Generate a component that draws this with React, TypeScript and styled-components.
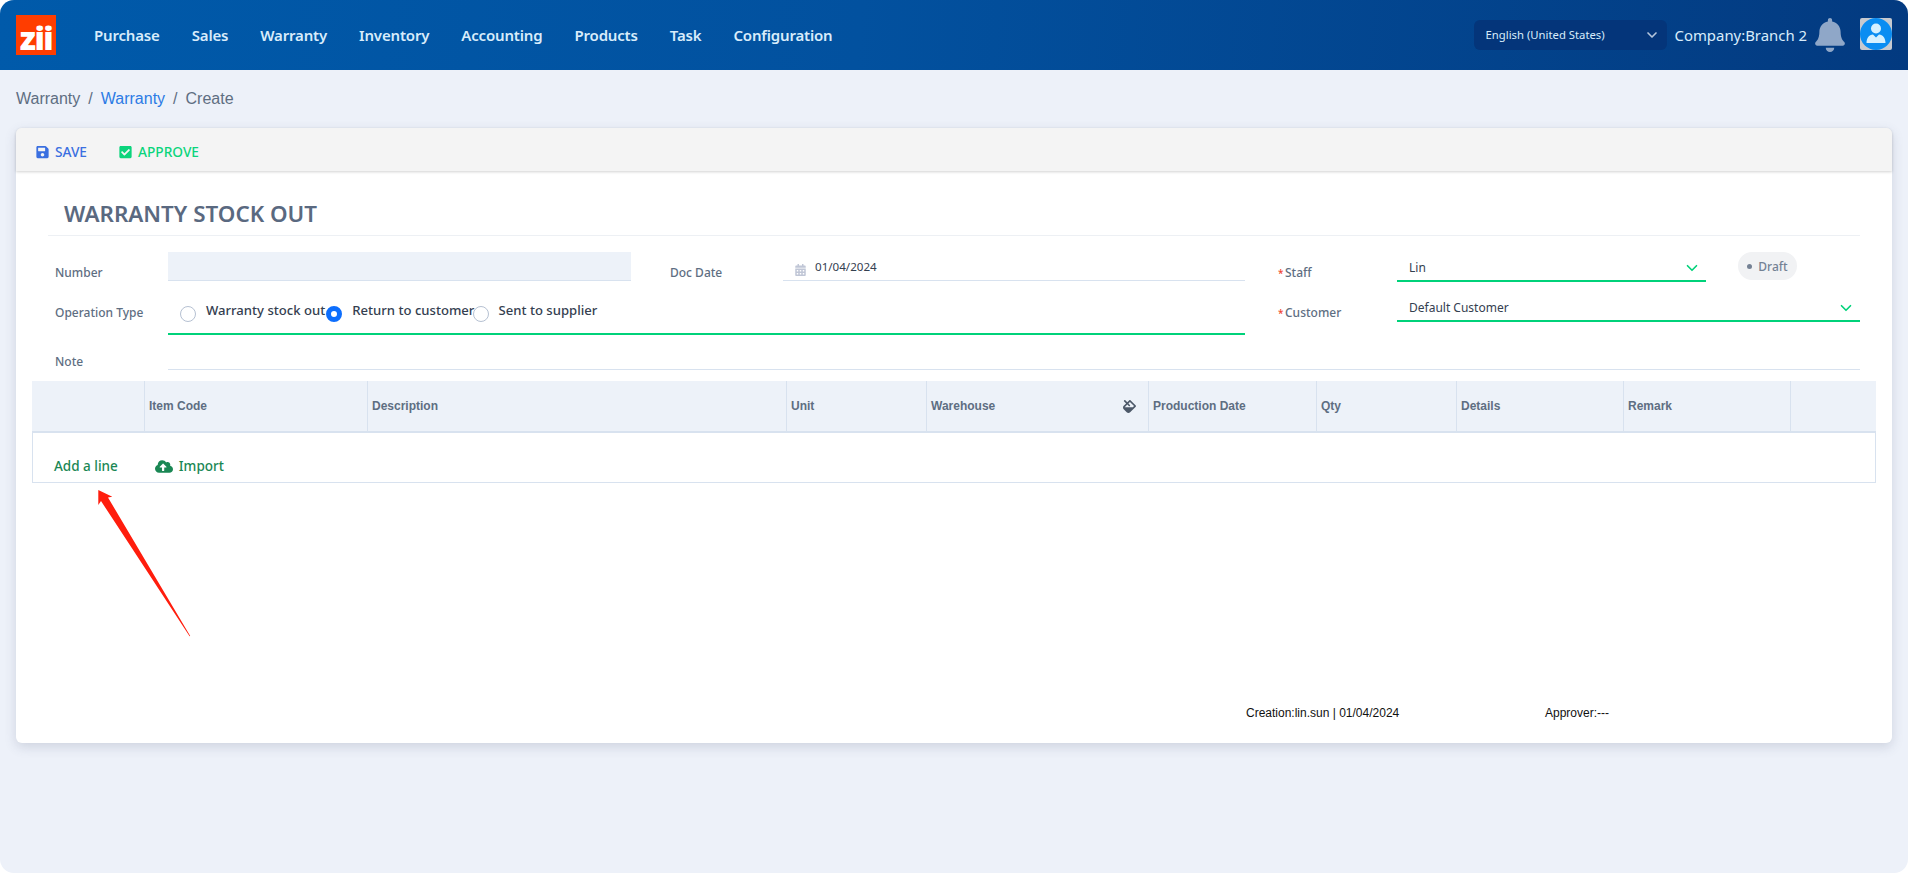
import React from 'react';
import styled, { createGlobalStyle } from 'styled-components';
import { FaSave, FaCheckSquare, FaFill, FaCloudUploadAlt, FaBell, FaCalendarAlt } from 'react-icons/fa';
import { ChevronDown } from 'lucide-react';

const ui = '"Noto Sans", "Open Sans", sans-serif';
const arial = '"Liberation Sans", Arial, sans-serif';

const Global = createGlobalStyle`
  html, body { margin: 0; padding: 0; background: #fff; }
  * { box-sizing: border-box; }
  body { font-family: ${ui}; }
`;

const Shell = styled.div`
  position: relative;
  width: 1908px;
  height: 873px;
  overflow: hidden;
  border-radius: 14px;
  background: #edf1f9;
`;

const Header = styled.header`
  height: 70px;
  display: flex;
  align-items: center;
  padding: 0 16px;
  background: linear-gradient(95deg, #005aaa 0%, #02519f 45%, #033a80 100%);
`;

const Logo = styled.div`
  width: 40px;
  height: 40px;
  background: #ff3d00;
  color: #fff;
  font: 800 32px/32px "Open Sans", sans-serif;
  letter-spacing: -1.5px;
  display: flex;
  justify-content: center;
  align-items: flex-end;
  padding-bottom: 1px;
`;

const Nav = styled.nav`
  display: flex;
  gap: 32px;
  margin-left: 38px;
`;

const NavItem = styled.a`
  color: #d8ecfb;
  font: 600 15px/20px ${ui};
  letter-spacing: -0.17px;
`;

const HeaderRight = styled.div`
  margin-left: auto;
  display: flex;
  align-items: center;
`;

const LangSelect = styled.div`
  width: 193px;
  height: 30px;
  border-radius: 6px;
  background: #04357a;
  color: #d8ecfb;
  font: 400 11.3px/30px ${ui};
  padding: 0 7px 0 12px;
  display: flex;
  align-items: center;
  justify-content: space-between;
  svg { color: #b5c5dc; }
`;

const Company = styled.div`
  margin-left: 8px;
  color: #d8ecfb;
  font: 400 14.9px/22px ${ui};
  white-space: nowrap;
`;

const Bell = styled(FaBell)`
  width: 30px;
  height: 34px;
  margin-left: 8px;
  color: #8fa7c8;
`;

const Avatar = styled.svg`
  width: 32px;
  height: 32px;
  margin-left: 15px;
  margin-top: -2px;
`;

const Crumbs = styled.div`
  height: 58px;
  padding-left: 16px;
  display: flex;
  align-items: center;
  font: 400 16px/20px ${arial};
  color: #5e6e82;
`;

const CrumbSep = styled.span`
  margin: 0 8px;
`;

const CrumbLink = styled.a`
  color: #2c7be5;
`;

const Card = styled.main`
  margin: 0 16px;
  height: 615px;
  background: #fff;
  border-radius: 6px;
  box-shadow: 0 4px 12px rgba(65, 80, 110, 0.18);
  display: flex;
  flex-direction: column;
`;

const Toolbar = styled.div`
  height: 43px;
  background: #f4f4f4;
  border-radius: 6px 6px 0 0;
  box-shadow: 0 1px 3px rgba(0, 0, 0, 0.18);
  display: flex;
  align-items: center;
  padding: 4px 0 0 20px;
  gap: 32px;
`;

const ToolButton = styled.button<{ $color: string }>`
  border: 0;
  padding: 0;
  background: none;
  display: flex;
  align-items: center;
  gap: 6px;
  color: ${p => p.$color};
  font: 500 13.7px/18px ${ui};
  svg { width: 13px; height: 14px; }
`;

const TitleBar = styled.div`
  margin: 0 32px;
  padding: 28px 0 6px 16px;
  border-bottom: 1px solid #edf0f4;
  color: #5a6980;
  font: 600 22.4px/30px ${ui};
`;

const FormGrid = styled.div`
  margin: 16px 0 0 39px;
  display: grid;
  grid-template-columns: 113px 463px 39px 113px 462px 33px 119px 309px 32px 59px 63px;
  grid-template-rows: 30px 43px 25px;
  row-gap: 10px;
  color: #5e6e82;
  font: 500 12px/16px ${ui};
`;

const Label = styled.div<{ $col: number; $row: number }>`
  grid-column: ${p => p.$col};
  grid-row: ${p => p.$row};
  display: flex;
  align-items: flex-start;
  padding-top: ${p => (p.$row === 3 ? '9px' : '13px')};
  white-space: nowrap;
`;

const Star = styled.span`
  color: #f0452f;
  width: 7px;
  font-size: 10px;
`;

const Plain = styled.div<{ $col: string; $row: number; $filled?: boolean; $line?: string }>`
  grid-column: ${p => p.$col};
  grid-row: ${p => p.$row};
  background: ${p => (p.$filled ? '#edf2f9' : 'transparent')};
  border-bottom: 1px solid ${p => p.$line ?? '#d8e2ef'};
  height: ${p => (p.$filled ? '29px' : '100%')};
`;

const DateField = styled(Plain)`
  height: 29px;
  display: flex;
  align-items: center;
  padding: 0 0 0 12px;
  gap: 9px;
  color: #344050;
  font: 400 11.6px/16px ${ui};
  svg { width: 11px; height: 12px; color: #c0c6d6; margin-top: 7px; }
  span { margin-top: 1px; }
`;

const RadioField = styled.div`
  grid-column: 2 / 6;
  grid-row: 2;
  border-bottom: 2px solid #00d27a;
  height: 43px;
  display: flex;
  padding: 9px 0 0 12px;
`;

const RadioItem = styled.label`
  display: flex;
  align-items: flex-start;
`;

const RadioMark = styled.span<{ $on?: boolean }>`
  width: 16px;
  height: 16px;
  margin-top: 5px;
  border-radius: 50%;
  background: #fff;
  border: ${p => (p.$on ? '5px solid #0d6efd' : '1px solid #b6c1d2')};
`;

const RadioText = styled.span`
  margin-left: 10px;
  width: 120.3px;
  white-space: nowrap;
  color: #344050;
  font: 500 13.1px/18px ${ui};
`;

const SelectField = styled.div<{ $col: string; $row: number }>`
  grid-column: ${p => p.$col};
  grid-row: ${p => p.$row};
  height: 30px;
  border-bottom: 2px solid #00d27a;
  display: flex;
  align-items: center;
  justify-content: space-between;
  padding: 4px 5px 0 12px;
  color: #344050;
  font: 400 12px/16px ${ui};
  svg { color: #00d27a; margin-top: -1px; }
`;

const Pill = styled.div`
  grid-column: 10;
  grid-row: 1;
  height: 28px;
  border-radius: 14px;
  background: #f1f2f4;
  color: #748194;
  display: flex;
  align-items: center;
  justify-content: center;
  gap: 6px;
  font: 500 12px/16px ${ui};
  padding-top: 1px;
`;

const Dot = styled.i`
  width: 5px;
  height: 5px;
  border-radius: 50%;
  background: #748194;
`;

const TableWrap = styled.section`
  margin: 11px 16px 0;
`;

const HeadRow = styled.div`
  display: grid;
  grid-template-columns: 113px 223px 419px 140px 222px 168px 140px 167px 167px 85px;
  height: 52px;
  background: #edf2f9;
  border-bottom: 2px solid #d8e2ef;
`;

const HeadCell = styled.div`
  display: flex;
  align-items: center;
  justify-content: space-between;
  padding: 0 12px 0 4px;
  border-right: 1px solid #d8e2ef;
  color: #5e6e82;
  font: 700 12px/16px ${arial};
  &:last-child { border-right: 0; }
  svg { width: 13px; height: 13px; color: #4d5969; }
`;

const BodyRow = styled.div`
  height: 50px;
  border: 1px solid #d8e2ef;
  border-top: 0;
  display: flex;
  align-items: flex-end;
  padding: 0 0 6px 21px;
  color: #1a8754;
  font: 500 13.5px/20px ${ui};
`;

const ImportLink = styled.a`
  margin-left: 37px;
  display: flex;
  align-items: center;
  gap: 6px;
  svg { width: 18px; height: 15px; }
`;

const Footer = styled.footer`
  margin-top: auto;
  padding: 0 0 22px 1230px;
  display: flex;
  color: #111;
  font: 400 12px/16px ${arial};
`;

const Creation = styled.span`
  width: 299px;
`;

const Arrow = styled.svg`
  position: absolute;
  left: 90px;
  top: 485px;
  width: 106px;
  height: 156px;
`;

const navItems = ['Purchase', 'Sales', 'Warranty', 'Inventory', 'Accounting', 'Products', 'Task', 'Configuration'];
const cols = ['', 'Item Code', 'Description', 'Unit', 'Warehouse', 'Production Date', 'Qty', 'Details', 'Remark', ''];
const radios = [
  { text: 'Warranty stock out' },
  { text: 'Return to customer', on: true },
  { text: 'Sent to supplier' },
];

export default function App() {
  return (
    <Shell>
      <Global />
      <Header>
        <Logo>zii</Logo>
        <Nav>
          {navItems.map(n => <NavItem key={n}>{n}</NavItem>)}
        </Nav>
        <HeaderRight>
          <LangSelect>
            English (United States)
            <ChevronDown size={16} strokeWidth={2.5} />
          </LangSelect>
          <Company>Company:Branch 2</Company>
          <Bell />
          <Avatar viewBox="0 0 32 32">
            <rect width="32" height="32" rx="2" fill="#c6c9cf" />
            <circle cx="16" cy="16" r="16" fill="#0a8df2" />
            <circle cx="16" cy="10.5" r="5" fill="#d5f0ff" />
            <path d="M6.5 25c0-5 2.5-8 6.5-8.5l3 3 3-3c4 .5 6.5 3.5 6.5 8.5z" fill="#d5f0ff" />
          </Avatar>
        </HeaderRight>
      </Header>
      <Crumbs>
        Warranty<CrumbSep>/</CrumbSep><CrumbLink>Warranty</CrumbLink><CrumbSep>/</CrumbSep>Create
      </Crumbs>
      <Card>
        <Toolbar>
          <ToolButton $color="#3a6fe0"><FaSave />SAVE</ToolButton>
          <ToolButton $color="#0bd47c"><FaCheckSquare />APPROVE</ToolButton>
        </Toolbar>
        <TitleBar>WARRANTY STOCK OUT</TitleBar>
        <FormGrid>
          <Label $col={1} $row={1}>Number</Label>
          <Plain $col="2" $row={1} $filled />
          <Label $col={4} $row={1}>Doc Date</Label>
          <DateField $col="5" $row={1}><FaCalendarAlt /><span>01/04/2024</span></DateField>
          <Label $col={7} $row={1}><Star>*</Star>Staff</Label>
          <SelectField $col="8" $row={1}>Lin<ChevronDown size={18} strokeWidth={2.2} /></SelectField>
          <Pill><Dot />Draft</Pill>

          <Label $col={1} $row={2}>Operation Type</Label>
          <RadioField>
            {radios.map(r => (
              <RadioItem key={r.text}>
                <RadioMark $on={r.on} />
                <RadioText>{r.text}</RadioText>
              </RadioItem>
            ))}
          </RadioField>
          <Label $col={7} $row={2}><Star>*</Star>Customer</Label>
          <SelectField $col="8 / 12" $row={2}>Default Customer<ChevronDown size={18} strokeWidth={2.2} /></SelectField>

          <Label $col={1} $row={3}>Note</Label>
          <Plain $col="2 / 12" $row={3} />
        </FormGrid>
        <TableWrap>
          <HeadRow>
            {cols.map((c, i) => (
              <HeadCell key={i}>{c}{c === 'Warehouse' && <FaFill />}</HeadCell>
            ))}
          </HeadRow>
          <BodyRow>
            Add a line
            <ImportLink><FaCloudUploadAlt />Import</ImportLink>
          </BodyRow>
        </TableWrap>
        <Footer>
          <Creation>Creation:lin.sun | 01/04/2024</Creation>
          <span>Approver:---</span>
        </Footer>
      </Card>
      <Arrow viewBox="90 485 106 156">
        <polygon points="98.3,490 112.3,496.7 108,497.5 190.2,636 189.6,636.2 101,501 98.3,505" fill="#ff1d0d" />
      </Arrow>
    </Shell>
  );
}
